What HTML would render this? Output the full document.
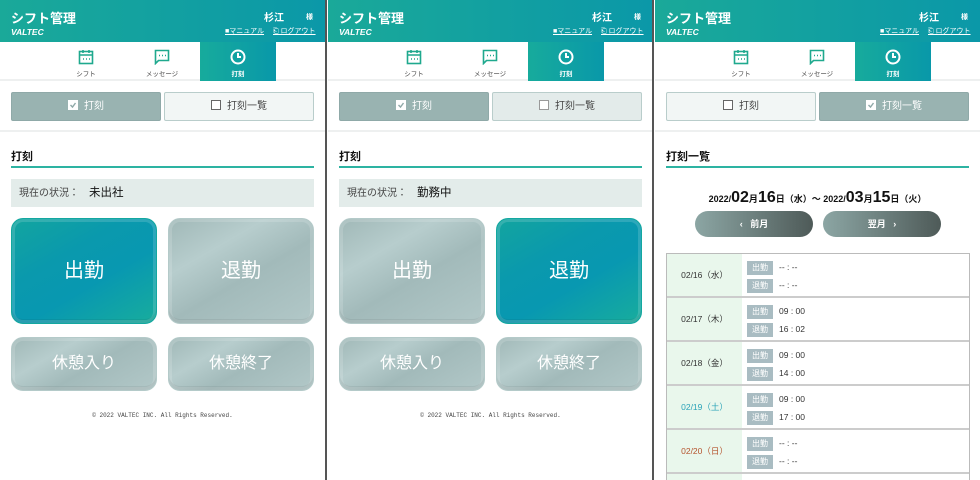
<!DOCTYPE html>
<html><head><meta charset="utf-8"><style>
*{box-sizing:border-box;margin:0;padding:0}
html,body{width:980px;height:480px;overflow:hidden}
body{background:#fff;font-family:"Liberation Sans","Noto Sans CJK JP",sans-serif;position:relative}
.p{position:absolute;top:0;width:325px;height:480px;overflow:hidden;background:#fff}
.div{position:absolute;top:0;width:2px;height:480px;background:#555}
.hd{position:absolute;left:0;top:0;width:325px;height:42px;background:linear-gradient(90deg,#1aa999,#0b98a8)}
.t1{position:absolute;left:11px;top:8px;color:#fff;font-weight:bold;font-size:13px}
.t2{position:absolute;left:11px;top:27px;color:#fff;font-weight:bold;font-style:italic;font-size:8.5px}
.nm{position:absolute;left:264px;top:9px;color:#fff;font-weight:bold;font-size:10px}
.sm{position:absolute;left:306px;top:12px;color:#fff;font-size:7px;font-weight:bold}
.lk{position:absolute;top:26px;color:#fff;font-size:7px;text-decoration:underline}
.nav{position:absolute;left:0;top:42px;width:325px;height:39px;border-bottom:2px solid #eef0f0}
.tab{position:absolute;top:0;width:76px;height:39px;text-align:center;font-size:6.5px;color:#444}
.tab svg{display:block;margin:7px auto 3px}
.tab.on{background:linear-gradient(90deg,#17ab9c,#0998a9);color:#fff;font-weight:bold}
.tg{position:absolute;top:92px;width:150px;height:29px;border-radius:2px;font-size:10px;text-align:center;line-height:28px}
.tg.s{background:#99b3b1;color:#fff;border:1px solid #8fa9a8}
.tg.u{background:#f2f6f5;border:1px solid #b9cdcb;color:#444}
.tg.u2{background:#e3ebea;border:1px solid #b9cdcb;color:#444}
.cb{display:inline-block;width:10px;height:10px;vertical-align:-1px;margin-right:6px}
.sep{position:absolute;left:0;top:130px;width:325px;height:2px;background:#eef0f0}
.h2{position:absolute;left:11px;top:148px;width:303px;height:20px;font-size:11px;font-weight:bold;color:#111;border-bottom:2px solid #2db3a2}
.st{position:absolute;left:11px;top:179px;width:303px;height:28px;background:#e3ecea;font-size:10px;color:#444;line-height:28px;padding-left:8px}
.st b{font-size:11.5px;color:#111;font-weight:normal;margin-left:10px}
.bb{position:absolute;border-radius:12px;color:#fff;text-align:center;font-size:20px;box-shadow:inset 0 -4px 0 rgba(0,0,0,0.06), inset 0 0 0 3px rgba(255,255,255,0.15)}
.g{background:linear-gradient(150deg,#a0b8b7 0%,#b7cdcd 30%,#a2baba 55%,#b2c8c8 100%);border:1px solid #b4cac9}
.a{background:linear-gradient(150deg,#13a59f 0%,#0a99ad 35%,#0898b1 60%,#18ad9d 100%);border:1px solid #13a8a0}
.ft{position:absolute;left:0;top:412px;width:325px;text-align:center;font-family:"Liberation Mono",monospace;font-size:6px;color:#444}
.dt{position:absolute;left:0;top:189px;width:325px;text-align:center;font-size:9px;color:#111;font-weight:bold}
.dt big{font-size:16px}
.nb{position:absolute;top:211px;width:118px;height:26px;border-radius:13px;background:linear-gradient(90deg,#8ca6a4,#4e5a58);color:#fff;font-size:9px;font-weight:bold;text-align:center;line-height:26px}
.tb{position:absolute;left:11px;top:253px;width:304px;height:230px;overflow:hidden;border:1px solid #bbb}
.r{height:44px;border-bottom:2px solid #ccc;position:relative}
.r .d{position:absolute;left:0;top:0;width:75px;height:42px;background:#e9f7ec;font-size:8.5px;line-height:42px;text-align:center;color:#333}
.r .l{position:absolute;left:80px;width:26px;height:14px;background:#a9bcc2;color:#fff;font-size:8px;text-align:center;line-height:14px}
.r .v{position:absolute;left:112px;font-size:8.5px;color:#333}
</style></head><body>

<div class="p" style="left:0">
<div class="hd"><div class="t1">シフト管理</div><div class="t2">VALTEC</div><div class="nm">杉江</div><div class="sm">様</div><div class="lk" style="left:225px">■マニュアル</div><div class="lk" style="left:273px">⎗ ログアウト</div></div>
<div class="nav">
<div class="tab" style="left:48px"><svg width="16" height="16" viewBox="0 0 16 16" fill="none" stroke="#1fa98e" stroke-width="1.6"><rect x="1.5" y="2.5" width="13" height="12"/><path d="M1.5 6h13M5 1v3M11 1v3"/><path d="M5 10h1M8 10h1M11 10h1" stroke-width="1.5"/></svg>シフト</div>
<div class="tab" style="left:124px"><svg width="16" height="16" viewBox="0 0 16 16" fill="none" stroke="#1fa98e" stroke-width="1.6"><path d="M1.5 1.5h13v10h-10l-3 3z"/><path d="M5 6.5h1M8 6.5h1M11 6.5h1" stroke-width="1.5"/></svg>メッセージ</div>
<div class="tab on" style="left:200px"><svg width="16" height="16" viewBox="0 0 16 16" fill="none" stroke="#fff" stroke-width="2"><circle cx="8" cy="8" r="6.5"/><path d="M8 4v4h3"/></svg>打刻</div>
</div>
<div class="tg s" style="left:11px"><svg class="cb" viewBox="0 0 10 10"><rect x="0.5" y="0.5" width="9" height="9" fill="#fff" stroke="#fff"/><path d="M2.5 5l2 2 3-4" fill="none" stroke="#8fa9a8" stroke-width="1.4"/></svg>打刻</div>
<div class="tg u" style="left:164px"><svg class="cb" viewBox="0 0 10 10"><rect x="0.5" y="0.5" width="9" height="9" fill="#fff" stroke="#666"/></svg>打刻一覧</div>
<div class="sep"></div>
<div class="h2">打刻</div>
<div class="st">現在の状況：<b>未出社</b></div>
<div class="bb a" style="left:11px;top:218px;width:146px;height:106px;line-height:104px">出勤</div>
<div class="bb g" style="left:168px;top:218px;width:146px;height:106px;line-height:104px">退勤</div>
<div class="bb g" style="left:11px;top:337px;width:146px;height:54px;line-height:52px;font-size:16px">休憩入り</div>
<div class="bb g" style="left:168px;top:337px;width:146px;height:54px;line-height:52px;font-size:16px">休憩終了</div>
<div class="ft">© 2022 VALTEC INC. All Rights Reserved.</div>
</div>
<div class="div" style="left:325px"></div>

<div class="p" style="left:328px">
<div class="hd"><div class="t1">シフト管理</div><div class="t2">VALTEC</div><div class="nm">杉江</div><div class="sm">様</div><div class="lk" style="left:225px">■マニュアル</div><div class="lk" style="left:273px">⎗ ログアウト</div></div>
<div class="nav">
<div class="tab" style="left:48px"><svg width="16" height="16" viewBox="0 0 16 16" fill="none" stroke="#1fa98e" stroke-width="1.6"><rect x="1.5" y="2.5" width="13" height="12"/><path d="M1.5 6h13M5 1v3M11 1v3"/><path d="M5 10h1M8 10h1M11 10h1" stroke-width="1.5"/></svg>シフト</div>
<div class="tab" style="left:124px"><svg width="16" height="16" viewBox="0 0 16 16" fill="none" stroke="#1fa98e" stroke-width="1.6"><path d="M1.5 1.5h13v10h-10l-3 3z"/><path d="M5 6.5h1M8 6.5h1M11 6.5h1" stroke-width="1.5"/></svg>メッセージ</div>
<div class="tab on" style="left:200px"><svg width="16" height="16" viewBox="0 0 16 16" fill="none" stroke="#fff" stroke-width="2"><circle cx="8" cy="8" r="6.5"/><path d="M8 4v4h3"/></svg>打刻</div>
</div>
<div class="tg s" style="left:11px"><svg class="cb" viewBox="0 0 10 10"><rect x="0.5" y="0.5" width="9" height="9" fill="#fff" stroke="#fff"/><path d="M2.5 5l2 2 3-4" fill="none" stroke="#8fa9a8" stroke-width="1.4"/></svg>打刻</div>
<div class="tg u2" style="left:164px"><svg class="cb" viewBox="0 0 10 10"><rect x="0.5" y="0.5" width="9" height="9" fill="#fff" stroke="#999"/></svg>打刻一覧</div>
<div class="sep"></div>
<div class="h2">打刻</div>
<div class="st">現在の状況：<b>勤務中</b></div>
<div class="bb g" style="left:11px;top:218px;width:146px;height:106px;line-height:104px">出勤</div>
<div class="bb a" style="left:168px;top:218px;width:146px;height:106px;line-height:104px">退勤</div>
<div class="bb g" style="left:11px;top:337px;width:146px;height:54px;line-height:52px;font-size:16px">休憩入り</div>
<div class="bb g" style="left:168px;top:337px;width:146px;height:54px;line-height:52px;font-size:16px">休憩終了</div>
<div class="ft">© 2022 VALTEC INC. All Rights Reserved.</div>
</div>
<div class="div" style="left:652px"></div>

<div class="p" style="left:655px">
<div class="hd"><div class="t1">シフト管理</div><div class="t2">VALTEC</div><div class="nm">杉江</div><div class="sm">様</div><div class="lk" style="left:225px">■マニュアル</div><div class="lk" style="left:273px">⎗ ログアウト</div></div>
<div class="nav">
<div class="tab" style="left:48px"><svg width="16" height="16" viewBox="0 0 16 16" fill="none" stroke="#1fa98e" stroke-width="1.6"><rect x="1.5" y="2.5" width="13" height="12"/><path d="M1.5 6h13M5 1v3M11 1v3"/><path d="M5 10h1M8 10h1M11 10h1" stroke-width="1.5"/></svg>シフト</div>
<div class="tab" style="left:124px"><svg width="16" height="16" viewBox="0 0 16 16" fill="none" stroke="#1fa98e" stroke-width="1.6"><path d="M1.5 1.5h13v10h-10l-3 3z"/><path d="M5 6.5h1M8 6.5h1M11 6.5h1" stroke-width="1.5"/></svg>メッセージ</div>
<div class="tab on" style="left:200px"><svg width="16" height="16" viewBox="0 0 16 16" fill="none" stroke="#fff" stroke-width="2"><circle cx="8" cy="8" r="6.5"/><path d="M8 4v4h3"/></svg>打刻</div>
</div>
<div class="tg u" style="left:11px"><svg class="cb" viewBox="0 0 10 10"><rect x="0.5" y="0.5" width="9" height="9" fill="#fff" stroke="#666"/></svg>打刻</div>
<div class="tg s" style="left:164px"><svg class="cb" viewBox="0 0 10 10"><rect x="0.5" y="0.5" width="9" height="9" fill="#fff" stroke="#fff"/><path d="M2.5 5l2 2 3-4" fill="none" stroke="#8fa9a8" stroke-width="1.4"/></svg>打刻一覧</div>
<div class="sep"></div>
<div class="h2">打刻一覧</div>
<div class="dt">2022/<big>02</big>月<big>16</big>日（水）～ 2022/<big>03</big>月<big>15</big>日（火）</div>
<div class="nb" style="left:40px">‹&nbsp;&nbsp;&nbsp;前月</div>
<div class="nb" style="left:168px">翌月&nbsp;&nbsp;&nbsp;›</div>
<div class="tb">
<div class="r"><div class="d">02/16（水）</div><div class="l" style="top:7px">出勤</div><div class="v" style="top:8px">-- : --</div><div class="l" style="top:25px">退勤</div><div class="v" style="top:26px">-- : --</div></div>
<div class="r"><div class="d">02/17（木）</div><div class="l" style="top:7px">出勤</div><div class="v" style="top:8px">09 : 00</div><div class="l" style="top:25px">退勤</div><div class="v" style="top:26px">16 : 02</div></div>
<div class="r"><div class="d">02/18（金）</div><div class="l" style="top:7px">出勤</div><div class="v" style="top:8px">09 : 00</div><div class="l" style="top:25px">退勤</div><div class="v" style="top:26px">14 : 00</div></div>
<div class="r"><div class="d" style="color:#2aa3b8">02/19（土）</div><div class="l" style="top:7px">出勤</div><div class="v" style="top:8px">09 : 00</div><div class="l" style="top:25px">退勤</div><div class="v" style="top:26px">17 : 00</div></div>
<div class="r"><div class="d" style="color:#b5542e">02/20（日）</div><div class="l" style="top:7px">出勤</div><div class="v" style="top:8px">-- : --</div><div class="l" style="top:25px">退勤</div><div class="v" style="top:26px">-- : --</div></div>
<div class="r"><div class="d"></div><div class="l" style="top:7px">出勤</div></div>
</div>
</div>
</body></html>
